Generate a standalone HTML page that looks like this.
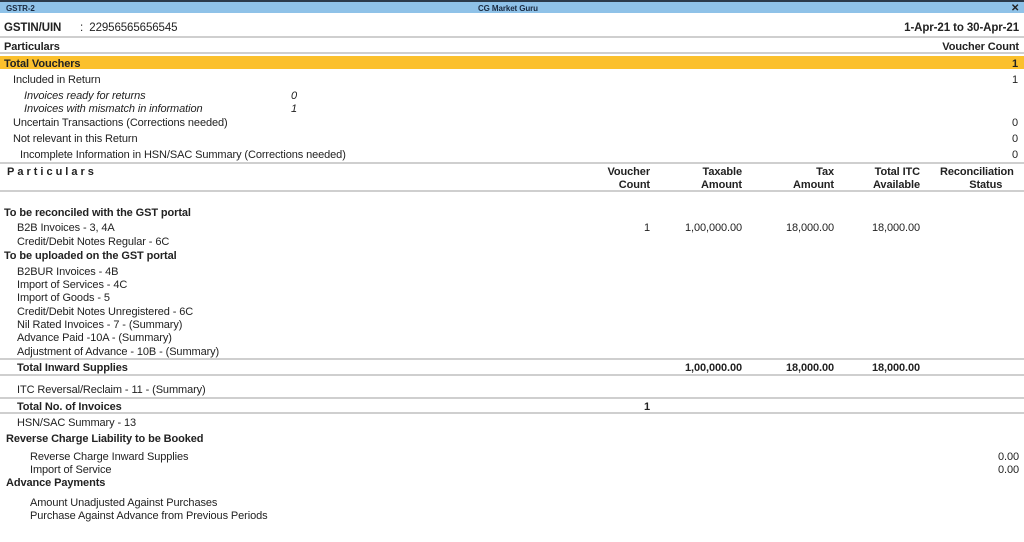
<!DOCTYPE html>
<html><head><meta charset="utf-8"><style>
body{margin:0;width:1024px;height:542px;overflow:hidden;background:#fff;font-family:"Liberation Sans",Arial,sans-serif;font-size:11px;color:#222;position:relative}
.t{position:absolute;white-space:nowrap;line-height:13px;margin-top:1.5px;letter-spacing:-0.1px}
.b{font-weight:bold}
.i{font-style:italic}
.r{text-align:right}
.ln{position:absolute;left:0;width:1024px;height:2px;background:#cfcfcf}
</style></head><body>
<div style="position:absolute;left:0;top:0;width:1024px;height:2px;background:#2b3a4a"></div>
<div style="position:absolute;left:0;top:2px;width:1024px;height:11px;background:#8fc2e8"></div>
<div class="t b" style="left:6px;top:0px;font-size:8px;line-height:13px;color:#1a2a40">GSTR-2</div>
<div class="t b" style="left:478px;top:0px;font-size:8px;line-height:13px;color:#1a2a40">CG Market Guru</div>
<div class="t b" style="left:1011px;top:0px;font-size:10px;line-height:13px">✕</div>
<div class="t b" style="left:4px;top:20px;font-size:11.5px">GSTIN/UIN</div>
<div class="t" style="left:80px;top:20px;font-size:11.5px">: &nbsp;22956565656545</div>
<div class="t b r" style="right:5px;top:20px;font-size:11.5px">1-Apr-21 to 30-Apr-21</div>
<div class="ln" style="top:36px"></div>
<div class="t b" style="left:4px;top:39px">Particulars</div>
<div class="t b r" style="right:5px;top:39px">Voucher Count</div>
<div class="ln" style="top:52px"></div>
<div style="position:absolute;left:0;top:56px;width:1024px;height:13px;background:#fbc02d"></div>
<div class="t b" style="left:4px;top:56px">Total Vouchers</div>
<div class="t b r" style="right:6px;top:56px">1</div>
<div class="t" style="left:13px;top:72px">Included in Return</div>
<div class="t r" style="right:6px;top:72px">1</div>
<div class="t i" style="left:24px;top:88px">Invoices ready for returns</div>
<div class="t i" style="left:291px;top:88px">0</div>
<div class="t i" style="left:24px;top:101px">Invoices with mismatch in information</div>
<div class="t i" style="left:291px;top:101px">1</div>
<div class="t" style="left:13px;top:115px">Uncertain Transactions (Corrections needed)</div>
<div class="t r" style="right:6px;top:115px">0</div>
<div class="t" style="left:13px;top:131px">Not relevant in this Return</div>
<div class="t r" style="right:6px;top:131px">0</div>
<div class="t" style="left:20px;top:147px">Incomplete Information in HSN/SAC Summary (Corrections needed)</div>
<div class="t r" style="right:6px;top:147px">0</div>
<div class="ln" style="top:162px"></div>
<div class="t b" style="left:7px;top:164px;letter-spacing:3px">Particulars</div>
<div class="t b r" style="right:374px;top:164px">Voucher<br>Count</div>
<div class="t b r" style="right:282px;top:164px">Taxable<br>Amount</div>
<div class="t b r" style="right:190px;top:164px">Tax<br>Amount</div>
<div class="t b r" style="right:104px;top:164px">Total ITC<br>Available</div>
<div class="t b" style="left:940px;top:164px;text-align:center">Reconciliation<br>&nbsp;&nbsp;&nbsp;&nbsp;&nbsp;&nbsp;Status</div>
<div class="ln" style="top:190px"></div>
<div class="t b" style="left:4px;top:205px">To be reconciled with the GST portal</div>
<div class="t" style="left:17px;top:220px">B2B Invoices - 3, 4A</div>
<div class="t r" style="right:374px;top:220px">1</div>
<div class="t r" style="right:282px;top:220px">1,00,000.00</div>
<div class="t r" style="right:190px;top:220px">18,000.00</div>
<div class="t r" style="right:104px;top:220px">18,000.00</div>
<div class="t" style="left:17px;top:234px">Credit/Debit Notes Regular - 6C</div>
<div class="t b" style="left:4px;top:248px">To be uploaded on the GST portal</div>
<div class="t" style="left:17px;top:264px">B2BUR Invoices - 4B</div>
<div class="t" style="left:17px;top:277px">Import of Services - 4C</div>
<div class="t" style="left:17px;top:290px">Import of Goods - 5</div>
<div class="t" style="left:17px;top:304px">Credit/Debit Notes Unregistered - 6C</div>
<div class="t" style="left:17px;top:317px">Nil Rated Invoices - 7 - (Summary)</div>
<div class="t" style="left:17px;top:330px">Advance Paid -10A - (Summary)</div>
<div class="t" style="left:17px;top:344px">Adjustment of Advance - 10B - (Summary)</div>
<div class="ln" style="top:358px"></div>
<div class="t b" style="left:17px;top:360px">Total Inward Supplies</div>
<div class="t b r" style="right:282px;top:360px">1,00,000.00</div>
<div class="t b r" style="right:190px;top:360px">18,000.00</div>
<div class="t b r" style="right:104px;top:360px">18,000.00</div>
<div class="ln" style="top:374px"></div>
<div class="t" style="left:17px;top:382px">ITC Reversal/Reclaim - 11 - (Summary)</div>
<div class="ln" style="top:397px"></div>
<div class="t b" style="left:17px;top:399px">Total No. of Invoices</div>
<div class="t b r" style="right:374px;top:399px">1</div>
<div class="ln" style="top:412px"></div>
<div class="t" style="left:17px;top:415px">HSN/SAC Summary - 13</div>
<div class="t b" style="left:6px;top:431px">Reverse Charge Liability to be Booked</div>
<div class="t" style="left:30px;top:449px">Reverse Charge Inward Supplies</div>
<div class="t r" style="right:5px;top:449px">0.00</div>
<div class="t" style="left:30px;top:462px">Import of Service</div>
<div class="t r" style="right:5px;top:462px">0.00</div>
<div class="t b" style="left:6px;top:475px">Advance Payments</div>
<div class="t" style="left:30px;top:495px">Amount Unadjusted Against Purchases</div>
<div class="t" style="left:30px;top:508px">Purchase Against Advance from Previous Periods</div>
</body></html>
